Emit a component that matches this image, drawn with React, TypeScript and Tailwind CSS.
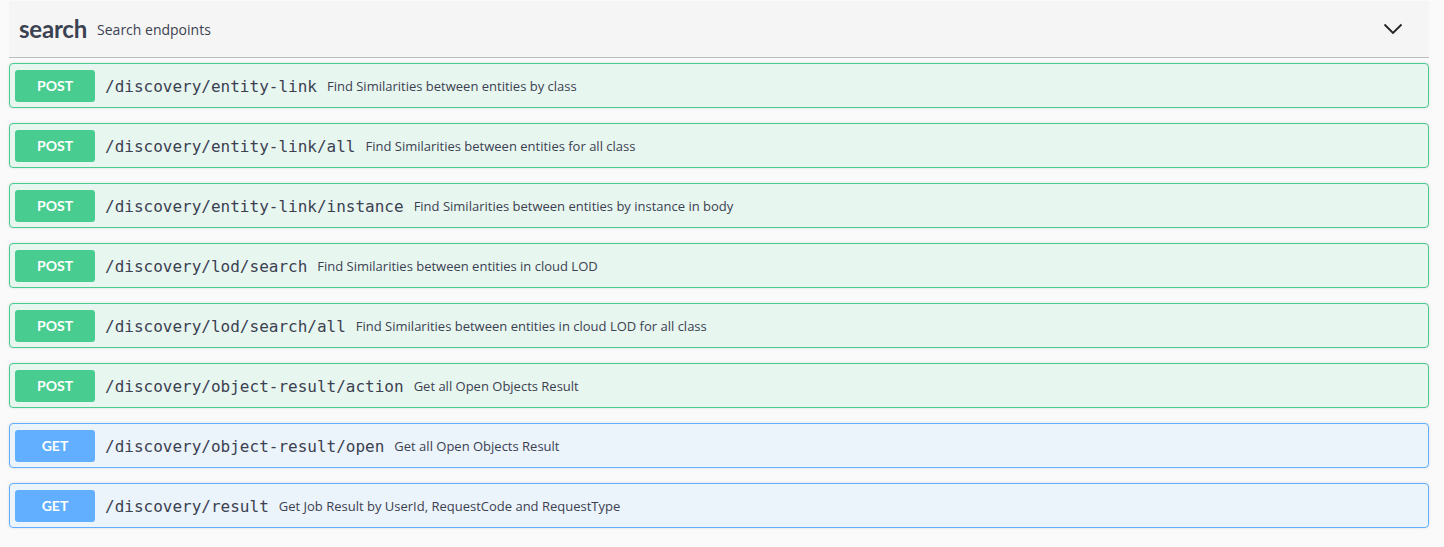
import React from "react";

type Op = { method: "POST" | "GET"; path: string; summary: string };

const ops: Op[] = [
  { method: "POST", path: "/discovery/entity-link", summary: "Find Similarities between entities by class" },
  { method: "POST", path: "/discovery/entity-link/all", summary: "Find Similarities between entities for all class" },
  { method: "POST", path: "/discovery/entity-link/instance", summary: "Find Similarities between entities by instance in body" },
  { method: "POST", path: "/discovery/lod/search", summary: "Find Similarities between entities in cloud LOD" },
  { method: "POST", path: "/discovery/lod/search/all", summary: "Find Similarities between entities in cloud LOD for all class" },
  { method: "POST", path: "/discovery/object-result/action", summary: "Get all Open Objects Result" },
  { method: "GET", path: "/discovery/object-result/open", summary: "Get all Open Objects Result" },
  { method: "GET", path: "/discovery/result", summary: "Get Job Result by UserId, RequestCode and RequestType" },
];

function OpRow({ op }: { op: Op }) {
  const isPost = op.method === "POST";
  return (
    <div
      className={
        isPost
          ? "flex h-[45px] items-center rounded-[4px] border border-[#49cc90] bg-[#e8f6f0] p-[5px] shadow-[0_0_3px_rgba(0,0,0,0.12)]"
          : "flex h-[45px] items-center rounded-[4px] border border-[#61affe] bg-[#ebf3fb] p-[5px] shadow-[0_0_3px_rgba(0,0,0,0.12)]"
      }
    >
      <span
        className={
          isPost
            ? "flex h-[32px] w-[80px] items-center justify-center rounded-[3px] bg-[#49cc90] text-[14px] font-bold text-white"
            : "flex h-[32px] w-[80px] items-center justify-center rounded-[3px] bg-[#61affe] text-[14px] font-bold text-white"
        }
        style={{ fontFamily: "Lato, sans-serif" }}
      >
        {op.method}
      </span>
      <span
        className="pl-[10px] pt-[2px] text-[16px] text-[#3b4151]"
        style={{ fontFamily: '"DejaVu Sans Mono", monospace' }}
      >
        {op.path}
      </span>
      <span
        className="pl-[10px] pt-[2px] text-[13px] text-[#3b4151]"
        style={{ fontFamily: '"Open Sans", sans-serif' }}
      >
        {op.summary}
      </span>
    </div>
  );
}

export default function App() {
  return (
    <div className="min-h-[547px] bg-[#fafafa] pt-px pr-[15px] pl-[9px]">
      <div className="flex h-[57px] items-center border-b border-[#bdbdbd] bg-[#f5f5f5] pl-[10px] pr-[26px]">
        <span
          className="text-[24px] font-bold tracking-[-0.2px] text-[#3b4151]"
          style={{ fontFamily: "Lato, sans-serif" }}
        >
          search
        </span>
        <span
          className="pl-[10px] pt-px text-[14px] text-[#3b4151]"
          style={{ fontFamily: '"Open Sans", sans-serif' }}
        >
          Search endpoints
        </span>
        <svg className="ml-auto" width="20" height="12" viewBox="0 0 20 12" fill="none">
          <path d="M1.5 1.5L10 10L18.5 1.5" stroke="#222" strokeWidth="1.8" />
        </svg>
      </div>
      <div className="mt-[5px] flex flex-col gap-[15px]">
        {ops.map((op) => (
          <OpRow key={op.path} op={op} />
        ))}
      </div>
    </div>
  );
}
